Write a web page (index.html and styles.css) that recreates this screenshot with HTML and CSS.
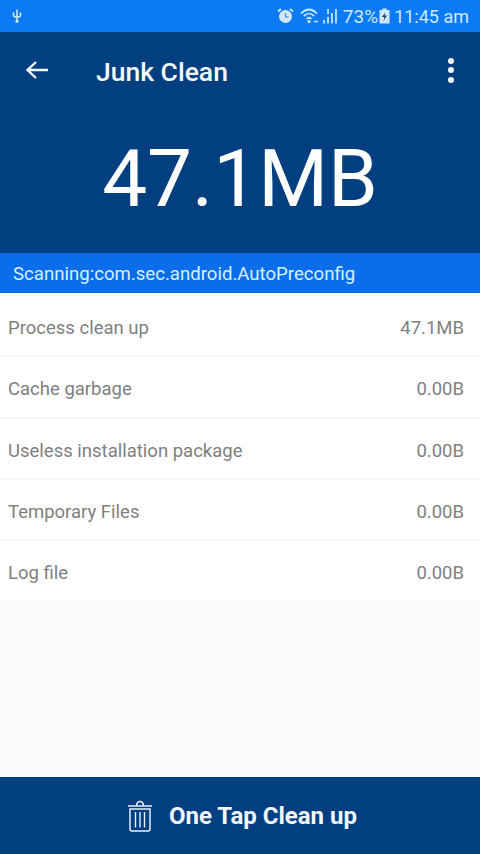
FILE: index.html
```html
<!DOCTYPE html>
<html lang="en">

<head>
    <meta charset="UTF-8" />
    <title>Junk Clean</title>
    <link rel="stylesheet" href="styles.css">
</head>

<body>
    <div class="app">
        <!-- status bar -->
        <div class="status">
            <svg class="usb" width="10" height="14" viewBox="0 0 10 14">
                <path d="M5 0.5 L5 13 M1.5 3.5 V6 Q1.5 7.5 3 7.8 L5 8.6 L7 7.8 Q8.5 7.5 8.5 6 V3.5" fill="none" stroke="#cfe8ff" stroke-width="1.6" />
                <circle cx="5" cy="12.2" r="1.6" fill="#cfe8ff" />
            </svg>
            <div class="status-right">
                <svg width="17" height="16" viewBox="0 0 17 16">
                    <circle cx="8.5" cy="8.5" r="6.5" fill="#cfe8ff" />
                    <path d="M1 3.5 L4 1 M16 3.5 L13 1" stroke="#cfe8ff" stroke-width="2" />
                    <path d="M8.5 5 V8.8 H11.5" fill="none" stroke="#4a8fd8" stroke-width="1.2" />
                </svg>
                <svg class="wifi" width="22" height="18" viewBox="0 0 22 18">
                    <path d="M1 6.5 Q9 -1.5 17 6.5 M3.8 9.2 Q9 3.8 14.2 9.2 M6.5 12 Q9 9.5 11.5 12" fill="none" stroke="#cfe8ff" stroke-width="1.7" />
                    <circle cx="9" cy="14.5" r="1.6" fill="#cfe8ff" />
                    <path d="M14 14.5 H18" stroke="#cfe8ff" stroke-width="1.5" />
                </svg>
                <svg class="signal" width="16" height="18" viewBox="0 0 16 18">
                    <path d="M2 16.5 V13 M6 16.5 V10 M10 16.5 V6 M14 16.5 V2" stroke="#cfe8ff" stroke-width="1.7" />
                    <path d="M6 2 V7" stroke="#cfe8ff" stroke-width="1.6" />
                </svg>
                <span class="pct">73%</span>
                <svg class="batt" width="11" height="16" viewBox="0 0 11 16">
                    <path d="M3.5 0.5 H7.5 V2 H10.5 V15.5 H0.5 V2 H3.5 Z" fill="#cfe8ff" />
                    <path d="M6.5 4 L3 9 H5.5 L4.5 13 L8 7.5 H5.5 Z" fill="#1f3a5c" />
                </svg>
                <span class="clock">11:45 am</span>
            </div>
        </div>

        <!-- title bar -->
        <div class="toolbar">
            <svg class="back" width="24" height="20" viewBox="0 0 24 20">
                <path d="M23 10 H3 M11 2 L2.5 10 L11 18" fill="none" stroke="#f4f9ff" stroke-width="2.4" />
            </svg>
            <span class="title">Junk Clean</span>
            <div class="dots"><i></i><i></i><i></i></div>
        </div>

        <div class="size">47.1MB</div>
        <div class="scan">Scanning:com.sec.android.AutoPreconfig</div>

        <!-- result list -->
        <ul class="list">
            <li><span>Process clean up</span><span>47.1MB</span></li>
            <li><span>Cache garbage</span><span>0.00B</span></li>
            <li><span>Useless installation package</span><span>0.00B</span></li>
            <li><span>Temporary Files</span><span>0.00B</span></li>
            <li><span>Log file</span><span>0.00B</span></li>
        </ul>

        <div class="clean">
            <svg width="26" height="32" viewBox="0 0 26 32">
                <path d="M1 6 H25 M9.5 5.5 Q10 1.5 13 1.5 Q16 1.5 16.5 5.5" fill="none" stroke="#e8f1fb" stroke-width="1.5" />
                <path d="M3 9 H23 V29 Q23 31 21 31 H5 Q3 31 3 29 Z" fill="none" stroke="#e8f1fb" stroke-width="1.5" />
                <path d="M8.5 12 V27.5 M13 12 V27.5 M17.5 12 V27.5" stroke="#e8f1fb" stroke-width="1.4" />
            </svg>
            <span>One Tap Clean up</span>
        </div>
    </div>
</body>

</html>
```

FILE: styles.css
```css
* {
    margin: 0;
    padding: 0;
    box-sizing: border-box;
}

html,
body {
    width: 480px;
    height: 854px;
    overflow: hidden;
}

body {
    font-family: Roboto, "Liberation Sans", sans-serif;
    background: #fafafa;
}

ul {
    list-style: none;
}

.app {
    height: 854px;
    display: flex;
    flex-direction: column;
}

.status {
    height: 32px;
    flex-shrink: 0;
    background: #0a7bf5;
    color: #cfe8ff;
    display: flex;
    align-items: center;
    justify-content: space-between;
    padding: 0 11px 0 12px;
}

.status-right {
    display: flex;
    align-items: center;
    font-size: 18px;
}

.wifi {
    margin-left: 6px;
}

.pct {
    margin-left: 5px;
    font-size: 19px;
}

.batt {
    margin-left: 1px;
}

.clock {
    margin-left: 4px;
}

.toolbar {
    height: 76px;
    flex-shrink: 0;
    background: #023f80;
    display: flex;
    align-items: center;
    padding: 0 26px 0 25px;
    color: #f4f9ff;
}

.title {
    margin-left: 47px;
    margin-top: 2px;
    font-size: 26.5px;
    font-weight: 500;
    flex: 1;
}

.dots {
    display: flex;
    flex-direction: column;
    gap: 3.5px;
}

.dots i {
    display: block;
    width: 6px;
    height: 6px;
    border-radius: 50%;
    background: #f4f9ff;
}

.size {
    height: 145px;
    flex-shrink: 0;
    background: #023f80;
    color: #fff;
    font-size: 80px;
    line-height: 142px;
    text-align: center;
}

.scan {
    height: 40px;
    flex-shrink: 0;
    background: #0a6eea;
    color: #d8f0ff;
    font-size: 18.6px;
    line-height: 43px;
    padding-left: 13px;
}

.list {
    flex: 1;
    padding-top: 3px;
    background: linear-gradient(#fff, #fff) top / 100% 3px no-repeat;
}

.list li {
    height: 61.3px;
    background: #fff;
    border-bottom: 2px solid #f8f8f8;
    display: flex;
    align-items: center;
    justify-content: space-between;
    padding: 5px 16px 0 8px;
    color: #808080;
    font-size: 18.5px;
}

.clean {
    height: 77px;
    flex-shrink: 0;
    background: #023f80;
    color: #f0f6fd;
    display: flex;
    align-items: center;
    justify-content: center;
    gap: 16px;
    padding: 1px 0 0 4px;
    font-size: 24px;
    font-weight: 700;
}
```
